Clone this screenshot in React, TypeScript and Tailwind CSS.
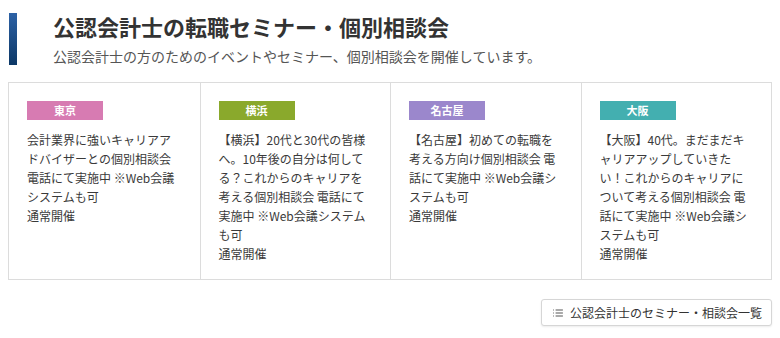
import { LuList } from "react-icons/lu";

type Seminar = {
  area: string;
  color: string;
  text: string;
};

const SEMINARS: Seminar[] = [
  {
    area: "東京",
    color: "bg-[#d77bb2]",
    text: "会計業界に強いキャリアアドバイザーとの個別相談会 電話にて実施中 ※Web会議システムも可",
  },
  {
    area: "横浜",
    color: "bg-[#8aa92c]",
    text: "【横浜】20代と30代の皆様へ。10年後の自分は何してる？これからのキャリアを考える個別相談会 電話にて実施中 ※Web会議システムも可",
  },
  {
    area: "名古屋",
    color: "bg-[#9b87cc]",
    text: "【名古屋】初めての転職を考える方向け個別相談会 電話にて実施中 ※Web会議システムも可",
  },
  {
    area: "大阪",
    color: "bg-[#43afb0]",
    text: "【大阪】40代。まだまだキャリアアップしていきたい！これからのキャリアについて考える個別相談会 電話にて実施中 ※Web会議システムも可",
  },
];

const FONT = "font-['Noto_Sans_CJK_JP','Noto_Sans',sans-serif]";

function SeminarCell({ s, first }: { s: Seminar; first: boolean }) {
  return (
    <div
      className={`pl-[18px] pr-[20px] pt-[18px] pb-[16px] ${first ? "" : "border-l border-[#dcdcdc]"}`}
    >
      <div
        className={`w-[76px] h-[19px] ${s.color} text-white text-[11px] font-bold flex items-center justify-center`}
      >
        {s.area}
      </div>
      <p className="mt-[10px] text-[12px] leading-[19px] text-[#3a3a3a] break-all">
        {s.text}
        <br />
        通常開催
      </p>
    </div>
  );
}

export default function App() {
  return (
    <div className={`w-[780px] h-[338px] bg-white ${FONT} pt-[13px]`}>
      {/* Heading */}
      <div className="flex gap-[36px] pl-[9px]">
        <div className="w-[8px] h-[52px] bg-gradient-to-b from-[#2d62a6] to-[#0c3866]" />
        <div>
          <h1 className="text-[22px] leading-[26px] font-bold text-[#333]">
            公認会計士の転職セミナー・個別相談会
          </h1>
          <p className="mt-[8px] text-[14px] leading-[18px] text-[#555]">
            公認会計士の方のためのイベントやセミナー、個別相談会を開催しています。
          </p>
        </div>
      </div>

      {/* Seminar grid */}
      <div className="mx-[8px] mt-[17px] w-[764px] grid grid-cols-4 border border-[#dcdcdc]">
        {SEMINARS.map((s, i) => (
          <SeminarCell key={s.area} s={s} first={i === 0} />
        ))}
      </div>

      {/* Link button */}
      <div className="flex justify-end pr-[8px] mt-[19px]">
        <button className="h-[27px] w-[231px] pl-[10px] flex items-center gap-[6px] border border-[#d6d6d6] rounded-[3px] shadow-[0_1px_2px_rgba(0,0,0,0.08)] text-[12px] text-[#333] bg-white">
          <LuList size={12} className="text-[#555]" />
          公認会計士のセミナー・相談会一覧
        </button>
      </div>
    </div>
  );
}
